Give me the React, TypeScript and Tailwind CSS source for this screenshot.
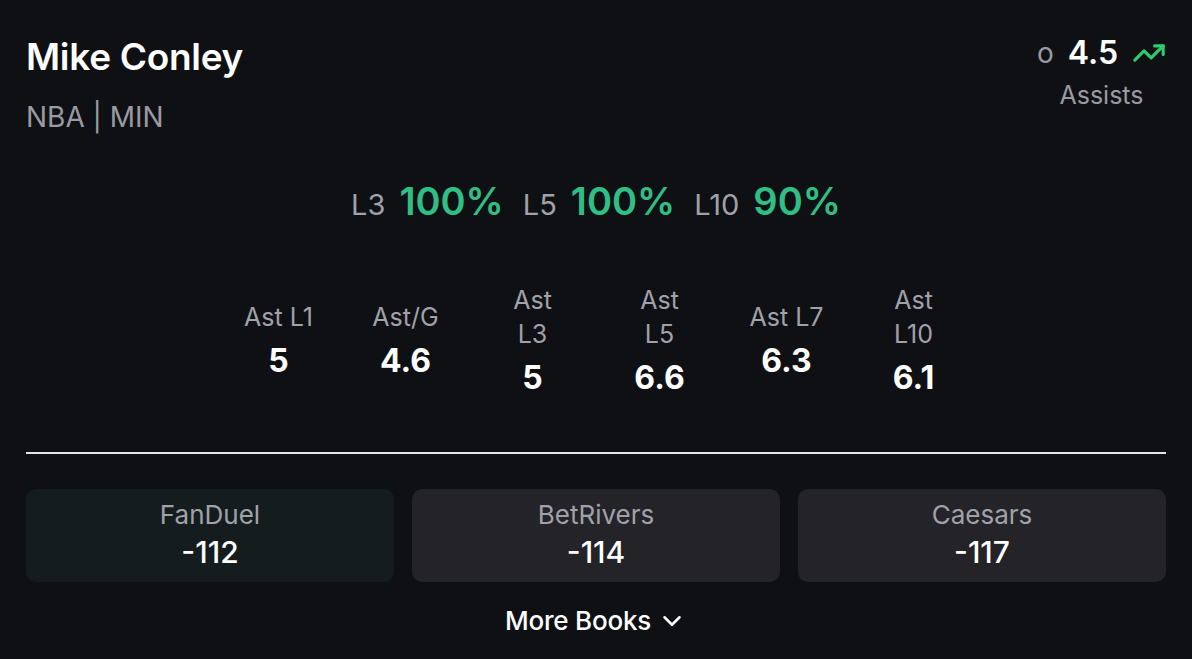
import type { FC } from "react";
import { ChevronDown, TrendingUp } from "lucide-react";

const hitRates = [
  { label: "L3", value: "100%" },
  { label: "L5", value: "100%" },
  { label: "L10", value: "90%" },
];

const stats = [
  { label: ["Ast L1"], value: "5" },
  { label: ["Ast/G"], value: "4.6" },
  { label: ["Ast", "L3"], value: "5" },
  { label: ["Ast", "L5"], value: "6.6" },
  { label: ["Ast L7"], value: "6.3" },
  { label: ["Ast", "L10"], value: "6.1" },
];

const books = [
  { name: "FanDuel", odds: "-112", best: true },
  { name: "BetRivers", odds: "-114", best: false },
  { name: "Caesars", odds: "-117", best: false },
];

const App: FC = () => {
  return (
    <div
      className="w-[1192px] h-[659px] overflow-hidden bg-[#0f1014] text-white px-[26px] pt-[35px]"
      style={{ fontFamily: "Inter, 'Noto Sans', sans-serif" }}
    >
      <div className="flex justify-between items-start">
        <div>
          <h1 className="text-[37px] leading-[44px] font-semibold tracking-[-0.3px]">Mike Conley</h1>
          <p className="mt-[22px] text-[28px] leading-[32px] text-[#9a9aa2]">NBA | MIN</p>
        </div>
        <div className="flex flex-col items-center">
          <div className="flex items-center h-[34px] mt-[1px]">
            <span className="text-[28px] text-[#9a9aa2] mr-[14px]">o</span>
            <span className="text-[32px] font-semibold">4.5</span>
            <TrendingUp className="ml-[14px] w-[34px] h-[34px] text-[#2ecc71]" strokeWidth={2.2} />
          </div>
          <span className="mt-[8px] text-[25px] leading-[34px] text-[#9a9aa2]">Assists</span>
        </div>
      </div>

      <div className="mt-[46px] flex justify-center items-baseline gap-[19px]">
        {hitRates.map((h) => (
          <div key={h.label} className="flex items-baseline gap-[14px]">
            <span className="text-[29px] leading-[44px] text-[#a1a1a9]">{h.label}</span>
            <span className="text-[38px] leading-[44px] font-semibold text-[#2fbf84]">{h.value}</span>
          </div>
        ))}
      </div>

      <div className="mt-[56px] flex justify-center items-center">
        {stats.map((s) => (
          <div key={s.value + s.label.join()} className="w-[127px] flex flex-col items-center">
            {s.label.map((l) => (
              <span key={l} className="text-[25px] leading-[34px] text-[#a1a1a9]">{l}</span>
            ))}
            <span className="mt-[6px] text-[32px] leading-[42px] font-bold">{s.value}</span>
          </div>
        ))}
      </div>

      <div className="mt-[53px] h-[2px] bg-[#e4e4e7]" />

      <div className="mt-[35px] grid grid-cols-3 gap-[18px]">
        {books.map((b) => (
          <div
            key={b.name}
            className={`h-[93px] rounded-[10px] flex flex-col items-center pt-[10px] ${b.best ? "bg-[#141c1d]" : "bg-[#232328]"}`}
          >
            <span className="text-[26px] leading-[32px] text-[#a1a1a9]">{b.name}</span>
            <span className="mt-[2px] text-[30px] leading-[38px] font-medium">{b.odds}</span>
          </div>
        ))}
      </div>

      <div className="mt-[23px] flex justify-center items-center gap-[6px]">
        <span className="text-[26px] leading-[32px] font-medium tracking-[-0.2px]">More Books</span>
        <ChevronDown className="w-[30px] h-[30px]" strokeWidth={2} />
      </div>
    </div>
  );
};

export default App;
